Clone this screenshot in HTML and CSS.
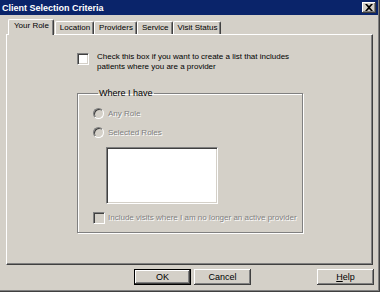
FILE: index.html
```
<!doctype html>
<html>
	<head>
		<title>Client Selection Criteria</title>
		<link rel="stylesheet" href="styles.css">
	</head>
	<body>
		<div class="window">
			<div class="titlebar">
				<span class="title">Client Selection Criteria</span>
				<span class="close">
					<svg width="8" height="7" viewBox="0 0 8 7"><path d="M0 0h2l2 2 2-2h2L5 3.5 8 7H6L4 5 2 7H0l3-3.5z" fill="#000"/></svg>
				</span>
			</div>

			<div class="client">
				<div class="tabs">
					<div class="tab selected">Your Role</div>
					<div class="tab">Location</div>
					<div class="tab">Providers</div>
					<div class="tab">Service</div>
					<div class="tab">Visit Status</div>
				</div>

				<div class="panel">
					<div class="check-row">
						<span class="checkbox"></span>
						<span class="check-label">Check this box if you want to create a list that includes patients where you are a provider</span>
					</div>

					<fieldset class="group">
						<legend>Where I have</legend>
						<div class="option">
							<span class="radio"></span>
							<span class="disabled">Any Role</span>
						</div>
						<div class="option">
							<span class="radio"></span>
							<span class="disabled">Selected Roles</span>
						</div>
						<div class="listbox"></div>
						<div class="option last">
							<span class="checkbox off"></span>
							<span class="disabled">Include visits where I am no longer an active provider</span>
						</div>
					</fieldset>
				</div>

				<div class="buttons">
					<button class="default">OK</button>
					<button>Cancel</button>
					<button class="help"><u>H</u>elp</button>
				</div>
			</div>
		</div>
	</body>
</html>
```

FILE: styles.css
```
body {
	margin: 0;
	font-family: "Liberation Sans", Arial, sans-serif;
	font-size: 8px;
	color: #000;
	background: #d4d0c8;
}

	.window {
		width: 380px;
		height: 292px;
		box-sizing: border-box;
		background: #d4d0c8;
		border-right: 1px solid #404040;
		border-bottom: 1px solid #404040;
		box-shadow: inset -1px -1px #808080;
	}

	.titlebar {
		height: 15px;
		margin-right: 1px;
		background: #0a246a;
		display: flex;
		align-items: center;
		justify-content: space-between;
		padding: 0 2px 0 2px;
		box-sizing: border-box;
	}

	.title {
		color: #fff;
		font-weight: bold;
		font-size: 9px;
	}

	.close {
		width: 14px;
		height: 11px;
		box-sizing: border-box;
		background: #d4d0c8;
		display: flex;
		align-items: center;
		justify-content: center;
		box-shadow: inset -1px -1px #404040, inset 1px 1px #fff, inset -2px -2px #808080;
	}

	.client {
		padding: 4px 0 0 6px;
	}

	.tabs {
		display: flex;
		padding-left: 4px;
		height: 15px;
		align-items: flex-end;
		position: relative;
		z-index: 1;
	}

	.tab {
		height: 13px;
		line-height: 12px;
		padding: 0 3px 0 4px;
		box-sizing: border-box;
		border-top: 1px solid #fff;
		border-left: 1px solid #fff;
		border-right: 1px solid #404040;
		box-shadow: inset -1px 0 #808080;
		border-radius: 2px 2px 0 0;
		background: #d4d0c8;
		white-space: nowrap;
	}

	.tab.selected {
		height: 16px;
		margin: 0 -2px -1px -2px;
		padding: 0 4px 3px 5px;
		position: relative;
		z-index: 2;
	}

	.tab.selected + .tab {
		margin-left: 3px;
	}

	.panel {
		width: 367px;
		height: 231px;
		box-sizing: border-box;
		border-top: 1px solid #fff;
		border-left: 1px solid #fff;
		border-right: 1px solid #404040;
		border-bottom: 1px solid #404040;
		box-shadow: inset -1px -1px #808080;
		padding: 18px 0 0 70px;
	}

	.check-row {
		display: flex;
		align-items: flex-start;
	}

	.checkbox {
		flex: none;
		width: 12px;
		height: 12px;
		box-sizing: border-box;
		background: #fff;
		border-top: 1px solid #808080;
		border-left: 1px solid #808080;
		border-right: 1px solid #fff;
		border-bottom: 1px solid #fff;
		box-shadow: inset 1px 1px #404040, inset -1px -1px #d4d0c8;
	}

	.checkbox.off {
		background: #d4d0c8;
	}

	.check-label {
		margin-left: 8px;
		width: 205px;
		line-height: 10px;
		margin-top: -1px;
	}

	.group {
		margin: 16px 0 0 0;
		width: 226px;
		height: 145px;
		box-sizing: border-box;
		border: 1px solid #808080;
		box-shadow: inset 1px 1px #fff, 1px 1px #fff;
		padding: 6px 0 0 15px;
	}

	.group legend {
		padding: 0 1px;
		margin-left: 5px;
		font-size: 9px;
	}

	.option {
		display: flex;
		align-items: center;
		height: 19px;
	}

	.option .disabled {
		margin-left: 4px;
	}

	.option.last {
		margin-top: 3px;
	}

	.option.last .disabled {
		margin-left: 3px;
	}

	.radio {
		flex: none;
		width: 11px;
		height: 11px;
		box-sizing: border-box;
		border-radius: 50%;
		background: #d4d0c8;
		border: 1px solid;
		border-color: #808080 #fff #fff #808080;
		box-shadow: inset 1px 1px #404040;
	}

	.disabled {
		color: #808080;
		text-shadow: 1px 1px #fff;
		white-space: nowrap;
	}

	.listbox {
		margin: 5px 0 4px 13px;
		width: 112px;
		height: 57px;
		box-sizing: border-box;
		background: #fff;
		border-top: 1px solid #808080;
		border-left: 1px solid #808080;
		border-right: 1px solid #fff;
		border-bottom: 1px solid #fff;
		box-shadow: inset 1px 1px #404040, inset -1px -1px #d4d0c8;
	}

	.buttons {
		display: flex;
		padding: 4px 0 0 128px;
	}

	.buttons button {
		width: 57px;
		height: 16px;
		margin: 0 3px 0 0;
		padding: 0;
		font-family: "Liberation Sans", Arial, sans-serif;
		font-size: 9px;
		color: #000;
		background: #d4d0c8;
		border: none;
		border-radius: 0;
		box-shadow: inset -1px -1px #404040, inset 1px 1px #fff, inset -2px -2px #808080;
	}

	.buttons button.default {
		border: 1px solid #000;
	}

	.buttons button.help {
		margin-left: 63px;
	}
```
